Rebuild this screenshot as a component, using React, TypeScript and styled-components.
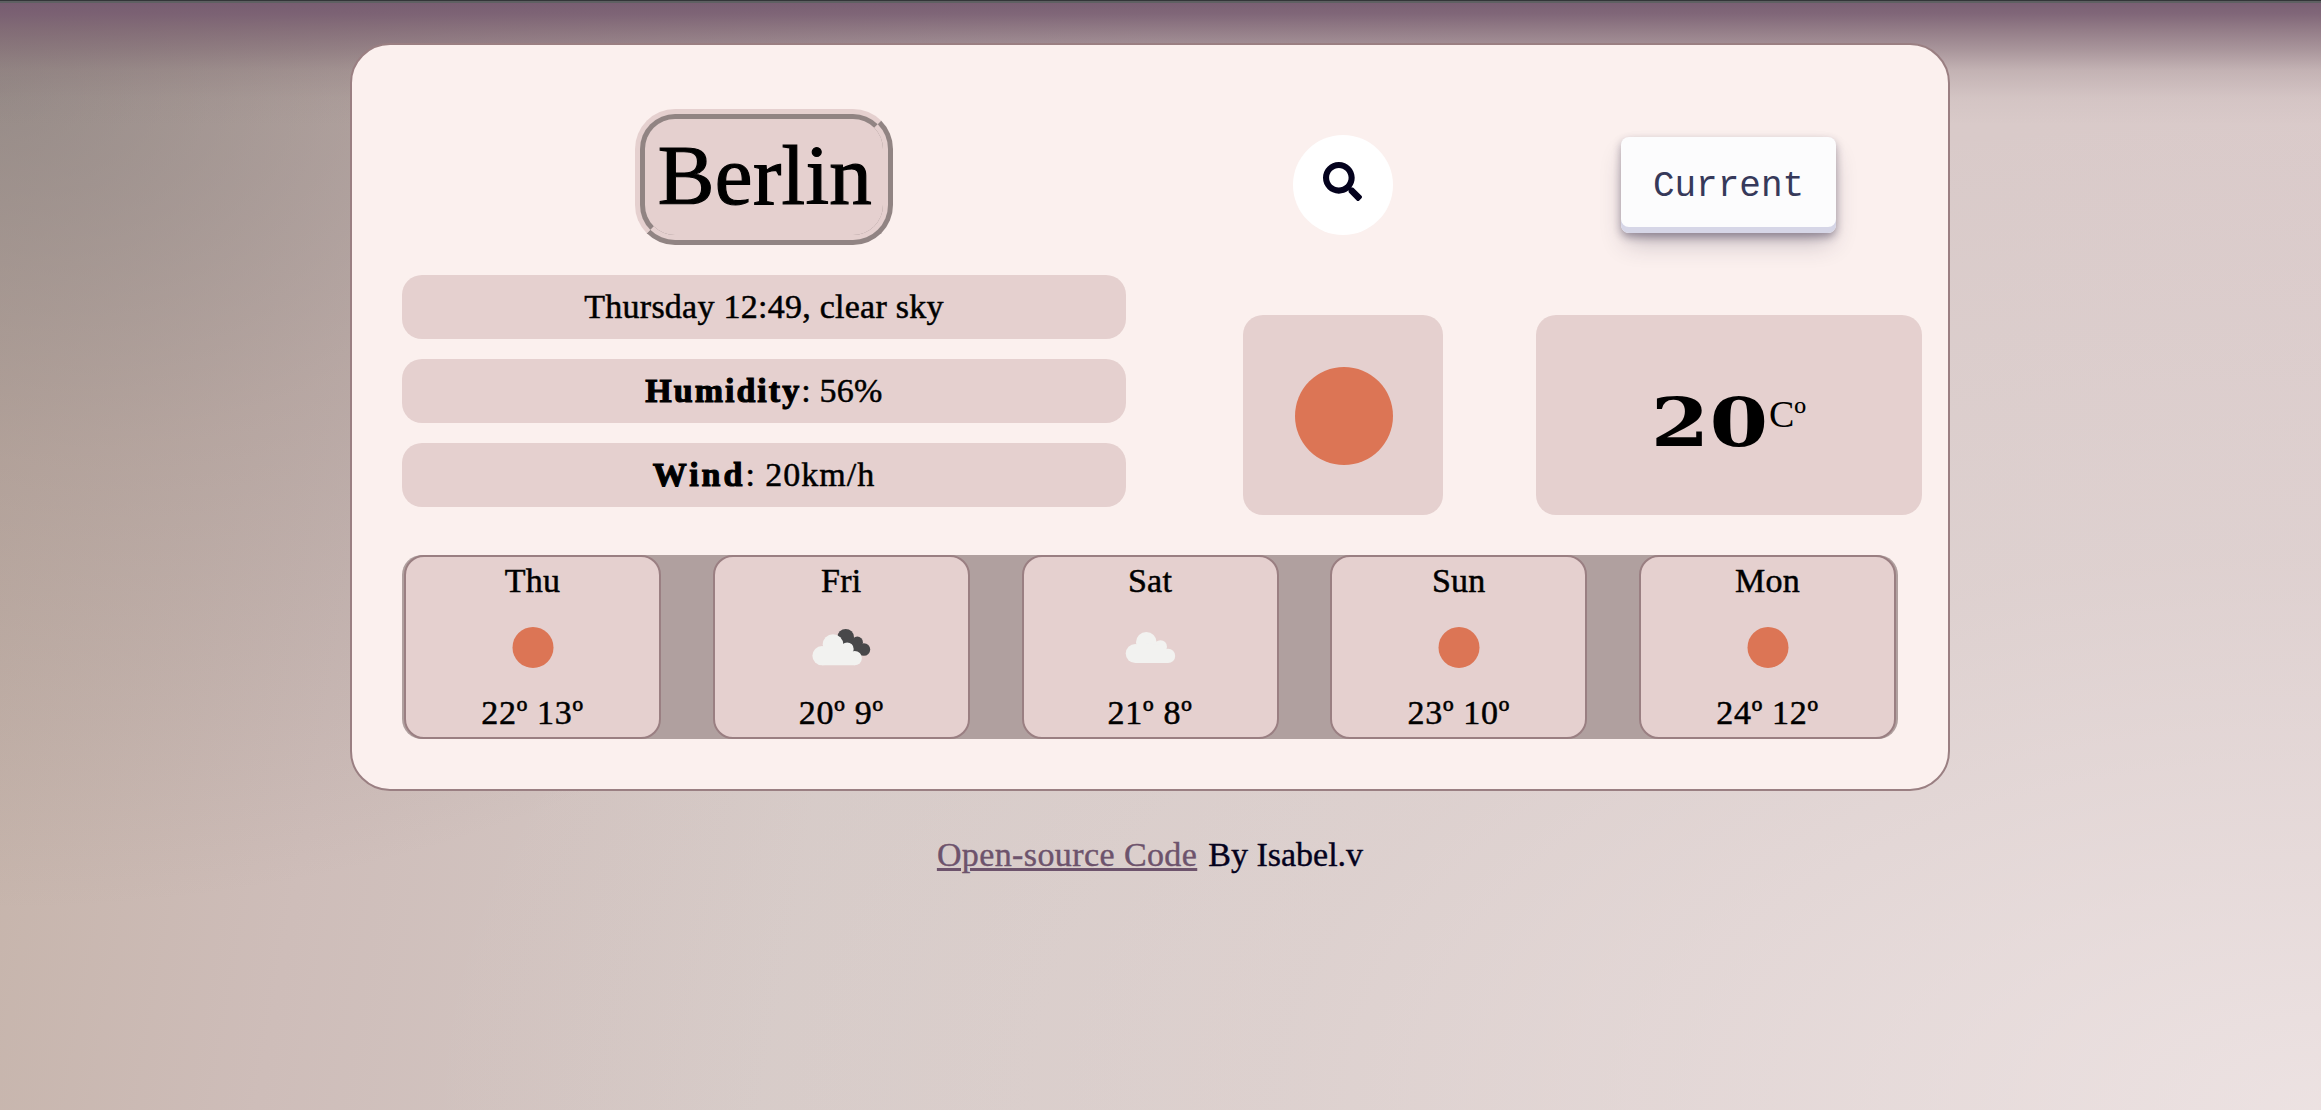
import React from "react";
import styled, { createGlobalStyle } from "styled-components";
import { FaSearch } from "react-icons/fa";

const serif = `"Liberation Serif", "Times New Roman", serif`;

const GlobalStyle = createGlobalStyle`
  *, *::before, *::after { box-sizing: border-box; }
  html, body { margin: 0; padding: 0; }
  body { font-family: ${serif}; color: #000; overflow: hidden; }
`;

const Page = styled.div`
  width: 100%;
  height: 1110px;
  padding-top: 43px;
  padding-left: 350px;
  background:
    linear-gradient(to bottom, #333538 0, #333538 1px, #5e6062 1px, #5e6062 3px, transparent 3px),
    linear-gradient(
      to bottom,
      rgba(117, 90, 111, 0.97) 0,
      rgba(119, 92, 112, 0.9) 14px,
      rgba(120, 94, 110, 0.74) 28px,
      rgba(122, 98, 110, 0.5) 50px,
      rgba(124, 102, 110, 0.24) 70px,
      rgba(125, 105, 112, 0.06) 98px,
      transparent 125px
    ),
    radial-gradient(ellipse 1150px 820px at 0 90px, rgba(116, 110, 112, 0.56), rgba(128, 114, 112, 0.28) 45%, transparent 100%),
    radial-gradient(ellipse 1900px 1000px at 100% 100%, rgba(244, 236, 236, 0.7), rgba(234, 226, 224, 0.28) 55%, transparent 100%),
    linear-gradient(100deg, #c3b1a6 0, #cebdb9 18%, #d5c9c6 38%, #d8cac8 60%, #dacaca 100%);
`;

const Card = styled.main`
  width: 1600px;
  height: 748px;
  padding: 64px 50px 50px;
  border: 2px solid #9a7f82;
  border-radius: 40px;
  background: #fbf0ee;
`;

const Columns = styled.div`
  display: grid;
  grid-template-columns: 724px 200px 386px;
  column-gap: 117px;
  width: 1544px;
`;

const Header = styled(Columns)`
  height: 136px;
  justify-items: center;
  align-items: center;
`;

const Summary = styled(Columns)`
  margin-top: 30px;
  align-items: start;
`;

const City = styled.h1`
  margin: 0;
  width: 258px;
  height: 136px;
  padding: 0 0 0 2px;
  border: 10px ridge #e5d0cf;
  border-radius: 40px;
  background: #e5d0cf;
  font-size: 85px;
  font-weight: 400;
  line-height: 113px;
  letter-spacing: 0.3px;
  text-align: center;
  -webkit-text-stroke: 1.2px #000;
`;

const SearchButton = styled.button`
  display: flex;
  justify-content: center;
  width: 100px;
  height: 100px;
  margin-top: 16px;
  padding: 27px 1px 0 0;
  border: 0;
  border-radius: 50%;
  background: #fff;
  color: #04021d;
  font-size: 39px;
`;

const CurrentButton = styled.button`
  width: 215px;
  height: 96px;
  margin: 16px 0 0 -49px;
  padding: 3px 0 0;
  border: 0;
  border-radius: 8px;
  background: #fcfcfd;
  box-shadow:
    rgba(45, 35, 66, 0.4) 0 4px 8px,
    rgba(45, 35, 66, 0.3) 0 14px 26px -6px,
    #d6d6e7 0 -6px 0 inset;
  color: #36395a;
  font-family: "Liberation Mono", "Courier New", monospace;
  font-size: 36px;
  line-height: 93px;
`;

const Facts = styled.ul`
  display: grid;
  row-gap: 20px;
  margin: 0;
  padding: 0;
  list-style: none;
`;

const Fact = styled.li<{ $tracking?: number; $label?: number }>`
  height: 64px;
  border-radius: 20px;
  background: #e5d0cf;
  font-size: 34px;
  line-height: 64px;
  letter-spacing: ${({ $tracking = 0.25 }) => $tracking}px;
  text-align: center;
  -webkit-text-stroke: 0.5px #000;

  strong {
    letter-spacing: ${({ $label = 2 }) => $label}px;
    -webkit-text-stroke: 1.1px #000;
  }
`;

const Tile = styled.section<{ $pull?: number }>`
  display: flex;
  align-items: center;
  justify-content: center;
  height: 200px;
  margin-top: 40px;
  margin-left: ${({ $pull = 0 }) => -$pull}px;
  margin-right: ${({ $pull = 0 }) => $pull}px;
  border-radius: 20px;
  background: #e5d0cf;
`;

const BigSun = styled.div`
  width: 98px;
  height: 98px;
  margin: 2px 0 0 2px;
  border-radius: 50%;
  background: #dc7555;
`;

const Temperature = styled.div`
  display: flex;
  align-items: flex-start;
  padding: 15px 0 0 10px;
`;

const Degrees = styled.strong`
  display: block;
  width: 94px;
  font-family: "DejaVu Serif", serif;
  font-size: 68px;
  line-height: 71px;
  transform: scaleX(1.24);
`;

const Unit = styled.span`
  margin: 7px 0 0 13px;
  font-size: 38px;
  line-height: 40px;
`;

const Forecast = styled.section`
  display: flex;
  justify-content: space-between;
  height: 184px;
  margin-top: 40px;
  padding: 0 2px;
  border-radius: 20px;
  background: #b0a09f;
`;

const Day = styled.article`
  display: flex;
  flex-direction: column;
  align-items: center;
  width: 257px;
  padding-top: 4px;
  border: 2px solid #9a7f82;
  border-radius: 20px;
  background: #e5d0cf;
  font-size: 34px;
  line-height: 40px;
  letter-spacing: 0.25px;
  -webkit-text-stroke: 0.5px #000;
`;

const Range = styled.span`
  letter-spacing: 0.7px;
`;

const DayIcon = styled.svg`
  display: block;
  width: 100px;
  height: 92px;
`;

const Footer = styled.footer`
  display: flex;
  justify-content: center;
  gap: 11px;
  width: 1600px;
  margin-top: 44px;
  color: #04021d;
  font-size: 34px;
  line-height: 40px;
  -webkit-text-stroke: 0.4px;
`;

const SourceLink = styled.a`
  color: #6d536c;
  letter-spacing: 0.4px;
  text-decoration: underline;
  text-decoration-thickness: 3px;
  text-underline-offset: 2px;
`;

type Sky = "sun" | "cloud" | "clouds";

const Cloud = () => (
  <g fill="#f2f2f0">
    <circle cx="-14.7" cy="6.5" r="9.6" />
    <circle cx="-3.7" cy="-4.7" r="10.3" />
    <circle cx="10.5" cy="-0.3" r="6.5" />
    <circle cx="18" cy="8.9" r="7.2" />
    <path d="M-14.7 16.1V-1L-4-4L10 -2L18 6V16.1Z" />
  </g>
);

const WeatherIcon = ({ sky }: { sky: Sky }) => (
  <DayIcon viewBox="-50 -46 100 92" aria-hidden="true">
    {sky === "sun" && <circle cx="0" cy="0.4" r="20.5" fill="#dc7555" />}
    {sky === "cloud" && <Cloud />}
    {sky === "clouds" && (
      <>
        <g fill="#48484a">
          <circle cx="4.7" cy="-9.8" r="8.3" />
          <circle cx="16.3" cy="-4.8" r="5.6" />
          <circle cx="22.9" cy="2.5" r="6.3" />
          <path d="M4 -6L16 -6L22 4L20 8.6H8Z" />
        </g>
        <g transform="translate(-4.3 2.2)">
          <Cloud />
        </g>
      </>
    )}
  </DayIcon>
);

const days: { name: string; sky: Sky; range: string }[] = [
  { name: "Thu", sky: "sun", range: "22º 13º" },
  { name: "Fri", sky: "clouds", range: "20º 9º" },
  { name: "Sat", sky: "cloud", range: "21º 8º" },
  { name: "Sun", sky: "sun", range: "23º 10º" },
  { name: "Mon", sky: "sun", range: "24º 12º" },
];

export default function App() {
  return (
    <>
      <GlobalStyle />
      <Page>
        <Card>
          <Header>
            <City>Berlin</City>
            <SearchButton aria-label="Search">
              <FaSearch />
            </SearchButton>
            <CurrentButton>Current</CurrentButton>
          </Header>
          <Summary>
            <Facts>
              <Fact>Thursday 12:49, clear sky</Fact>
              <Fact><strong>Humidity</strong>: 56%</Fact>
              <Fact $tracking={1} $label={3}><strong>Wind</strong>: 20km/h</Fact>
            </Facts>
            <Tile>
              <BigSun />
            </Tile>
            <Tile $pull={24}>
              <Temperature>
                <Degrees>20</Degrees>
                <Unit>Cº</Unit>
              </Temperature>
            </Tile>
          </Summary>
          <Forecast>
            {days.map((day) => (
              <Day key={day.name}>
                <span>{day.name}</span>
                <WeatherIcon sky={day.sky} />
                <Range>{day.range}</Range>
              </Day>
            ))}
          </Forecast>
        </Card>
        <Footer>
          <SourceLink href="#">Open-source Code</SourceLink>
          <span>By Isabel.v</span>
        </Footer>
      </Page>
    </>
  );
}
